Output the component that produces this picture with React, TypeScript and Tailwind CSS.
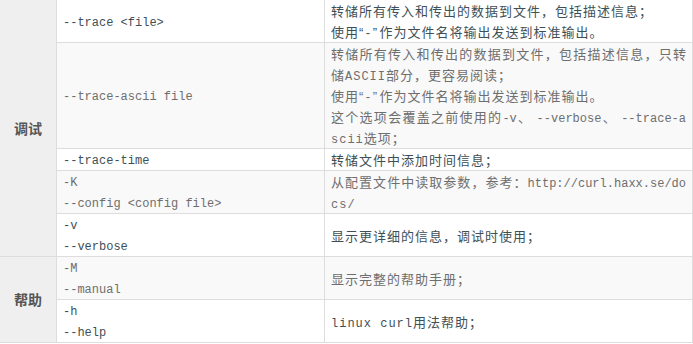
const mono = "font-['Consolas','Liberation_Mono','DejaVu_Sans_Mono',monospace] text-[12px]";

type Row = {
  opts: string[];
  desc: React.ReactNode;
  alt: boolean;
};

function Code({ children }: { children: React.ReactNode }) {
  return <span className={`${mono} leading-none`}>{children}</span>;
}

// narrow quotes like the original's "-" marks
function Dash() {
  return <span className="font-['Liberation_Sans',sans-serif] leading-none tracking-[2.5px]">“-”</span>;
}

const J = "block whitespace-nowrap tracking-normal [text-align:justify] [text-align-last:justify]";

const debugRows: Row[] = [
  {
    opts: ["--trace <file>"],
    desc: (
      <>
        <span className="block">转储所有传入和传出的数据到文件，包括描述信息；</span>
        <span className="block">
          使用<Dash />作为文件名将输出发送到标准输出。
        </span>
      </>
    ),
    alt: false,
  },
  {
    opts: ["--trace-ascii file"],
    desc: (
      <>
        <span className={J}>转储所有传入和传出的数据到文件，包括描述信息，只转</span>
        <span className="block">
          储<Code>ASCII</Code>部分，更容易阅读；
        </span>
        <span className="block">
          使用<Dash />作为文件名将输出发送到标准输出。
        </span>
        <span className={J}>
          这个选项会覆盖之前使用的<Code>-v</Code>、 <Code>--verbose</Code>、 <Code>--trace-a</Code>
        </span>
        <span className="block">
          <Code>scii</Code>选项；
        </span>
      </>
    ),
    alt: true,
  },
  {
    opts: ["--trace-time"],
    desc: <span className="block">转储文件中添加时间信息；</span>,
    alt: false,
  },
  {
    opts: ["-K", "--config <config file>"],
    desc: (
      <>
        <span className={J}>
          从配置文件中读取参数，参考：<Code>http://curl.haxx.se/do</Code>
        </span>
        <span className="block">
          <Code>cs/</Code>
        </span>
      </>
    ),
    alt: true,
  },
  {
    opts: ["-v", "--verbose"],
    desc: <span className="block">显示更详细的信息，调试时使用；</span>,
    alt: false,
  },
];

const helpRows: Row[] = [
  {
    opts: ["-M", "--manual"],
    desc: <span className="block">显示完整的帮助手册；</span>,
    alt: true,
  },
  {
    opts: ["-h", "--help"],
    desc: (
      <span className="block">
        <Code>linux curl</Code>用法帮助；
      </span>
    ),
    alt: false,
  },
];

function Cells({ row }: { row: Row }) {
  const tone = row.alt ? "bg-[#f9f9f9] text-[#6e6e6e]" : "bg-white text-[#3e5056]";
  return (
    <>
      <td className={`border border-[#dddddd] px-[6px] py-0 align-middle ${tone}`}>
        {row.opts.map((o) => (
          <div key={o} className={`${mono} h-[21px] leading-[25px] whitespace-pre`}>
            {o}
          </div>
        ))}
      </td>
      <td className={`border border-[#dddddd] px-[6px] py-0 align-middle ${tone}`}>
        <div className="text-[13px] leading-[21px] tracking-[1px] [&>span]:h-[21px]">{row.desc}</div>
      </td>
    </>
  );
}

function Group({ label, rows }: { label: string; rows: Row[] }) {
  return (
    <>
      {rows.map((r, i) => (
        <tr key={i}>
          {i === 0 && (
            <td
              rowSpan={rows.length}
              className="border border-[#dddddd] bg-[#efefef] text-center align-middle text-[14px] font-bold text-[#555555]"
            >
              {label}
            </td>
          )}
          <Cells row={r} />
        </tr>
      ))}
    </>
  );
}

export default function App() {
  return (
    <div className="h-[344px] w-[693px] overflow-hidden bg-white font-['Noto_Sans_CJK_SC','Noto_Sans',sans-serif]">
      <table className="-ml-px -mt-px w-[694px] table-fixed border-collapse">
        <colgroup>
          <col className="w-[57px]" />
          <col className="w-[268px]" />
          <col />
        </colgroup>
        <tbody>
          <Group label="调试" rows={debugRows} />
          <Group label="帮助" rows={helpRows} />
        </tbody>
      </table>
    </div>
  );
}
